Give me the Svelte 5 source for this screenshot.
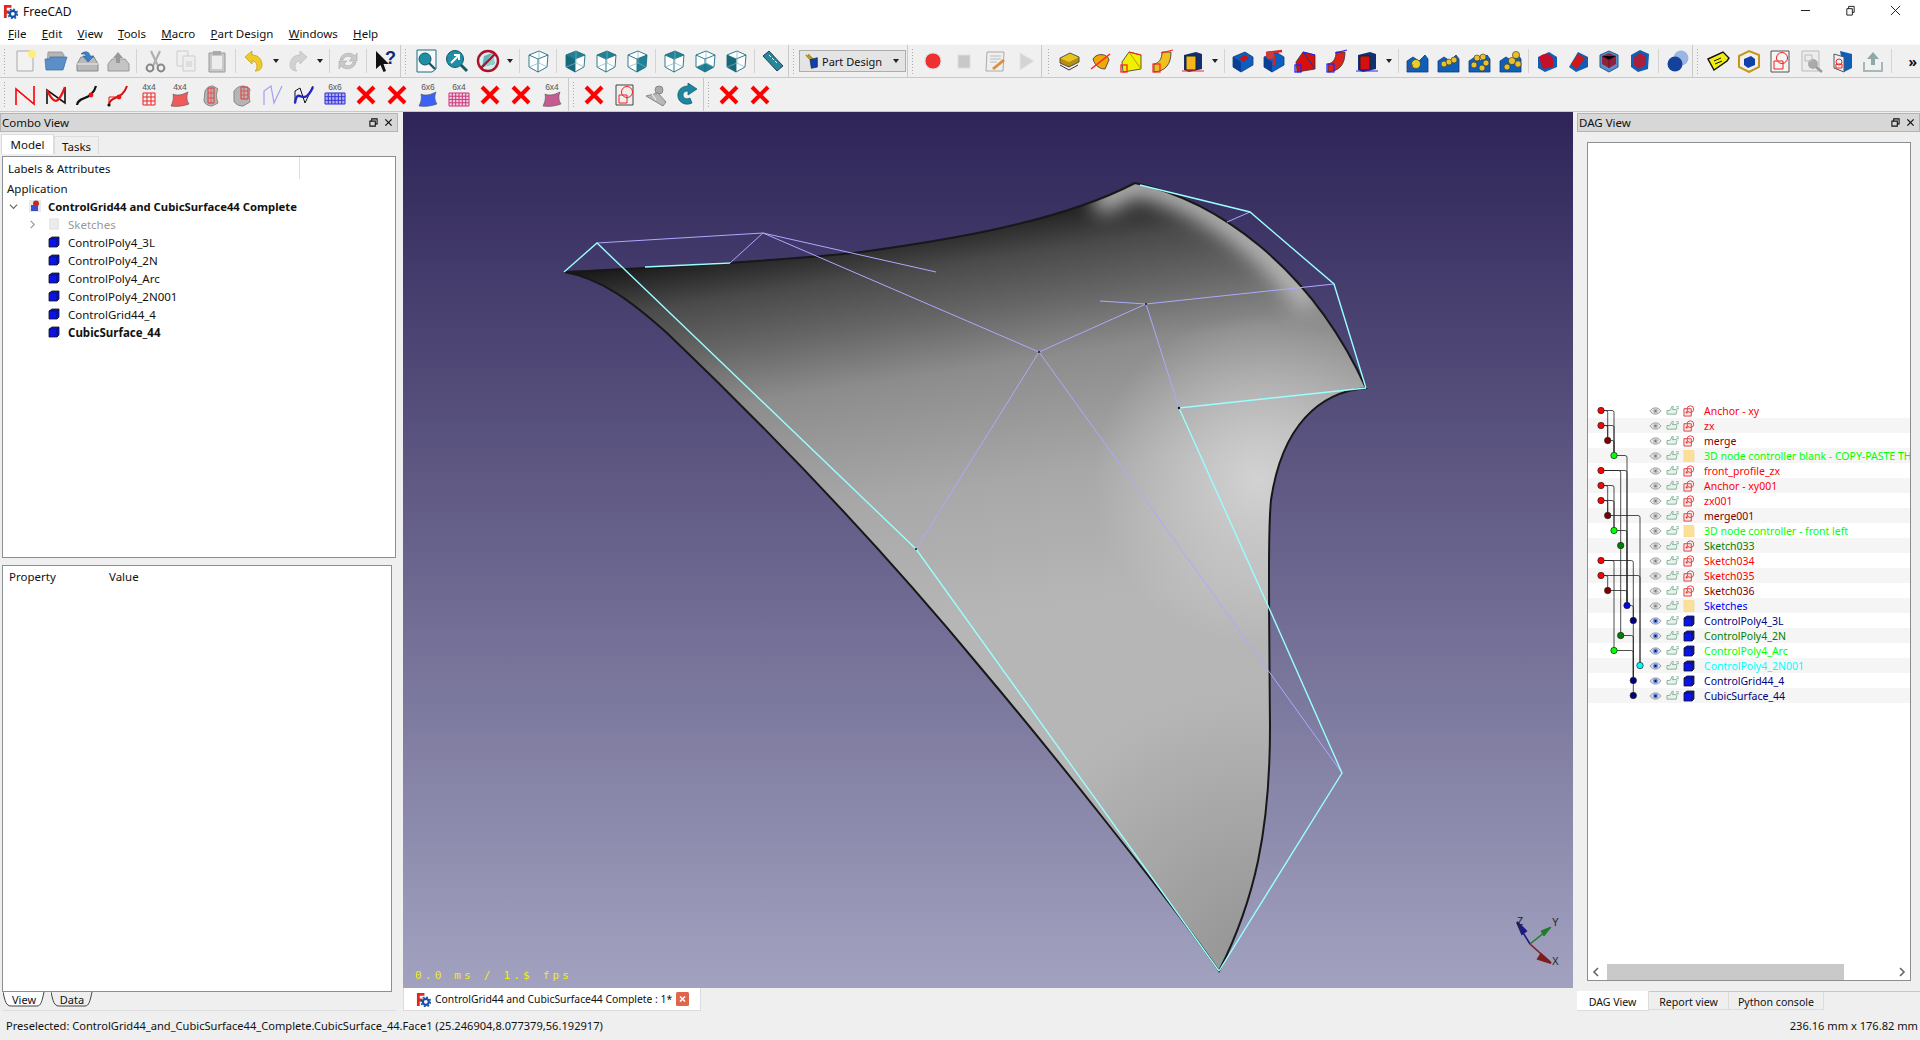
<script lang="ts">
  // shared icon pieces
  const X = '<path d="M4 4L20 20M20 4L4 20" stroke="#f00" stroke-width="4" fill="none"/>';
  const lbl = (t: string) =>
    `<text x="12" y="7" font-size="8.5" text-anchor="middle" font-family="Liberation Sans" fill="#555">${t}</text>`;

  function grid(t: string, cols: number, rows: number, col: string, w: number, h: number, fill = 'none') {
    const left = 12 - w / 2;
    const top = 10;
    let s = lbl(t) + `<rect x="${left}" y="${top}" width="${w}" height="${h}" fill="${fill}"/>`;
    for (let i = 0; i <= cols; i++) {
      const p = left + (w * i) / cols;
      s += `<path d="M${p} ${top}V${top + h}" stroke="${col}" stroke-width="1.1"/>`;
    }
    for (let i = 0; i <= rows; i++) {
      const p = top + (h * i) / rows;
      s += `<path d="M${left} ${p}H${left + w}" stroke="${col}" stroke-width="1.1"/>`;
    }
    return s;
  }

  const blob = (t: string, col: string) =>
    lbl(t) + `<path d="M5 11C9 13 14 12 20 9C18 14 19 18 21 21C16 23 9 24 3 23C5 19 6 15 5 11Z" fill="${col}" stroke="#555" stroke-width=".6"/>`;

  // view cube with one or more faces filled
  function cube(top = false, left = false, right = false, back = false) {
    const f = '#1f8296';
    return `<path d="M3 6L13 2L22 6L12 10Z" fill="${top ? f : '#fff'}"/>
      <path d="M3 6L12 10L12 23L3 18Z" fill="${left ? '#17687a' : '#fff'}"/>
      <path d="M12 10L22 6L21 18L12 23Z" fill="${right ? f : '#fff'}"/>
      ${back ? `<path d="M3 18L13 14L21 18L12 23Z" fill="${f}"/>` : ''}
      <path d="M3 6L13 2L22 6L21 18L12 23L3 18Z M3 6L12 10L22 6M12 10V23" fill="none" stroke="#1b6c80" stroke-width=".9"/>
      <path d="M13 2V14M3 18L13 14L21 18" fill="none" stroke="#7fb3bf" stroke-width=".7"/>`;
  }

  function pd(col: string, dark: string, kind: string, line: string) {
    const shapes: Record<string, string> = {
      pad: `<path d="M3 9L13 4L22 8L12 13Z" fill="${col}"/><path d="M3 9L12 13V18L3 14Z" fill="${dark}"/><path d="M12 13L22 8V13L12 18Z" fill="${dark}"/><path d="M3 9L13 4L22 8V13L12 18L3 14Z" fill="none" stroke="#333" stroke-width=".8"/><path d="M3 16L12 21L21 16" fill="none" stroke="#333" stroke-width="1"/>`,
      rev: `<path d="M5 10C9 3 20 5 21 11L17 20C12 20 7 17 5 10Z" fill="${col}" stroke="#333" stroke-width=".8"/><path d="M3 20L22 5" stroke="${line}" stroke-width="1.5"/>`,
      loft: `<path d="M3 13L10 3L22 6V20L4 23Z" fill="${col}" stroke="#333" stroke-width=".8"/><path d="M10 3L22 20" stroke="${dark}" stroke-width="1"/><rect x="2" y="16" width="6" height="7" fill="none" stroke="${line}" stroke-width="1.3"/><path d="M10 3L22 6" stroke="${line}" stroke-width="1.2"/>`,
      pipe: `<path d="M12 3H21C21 15 16 22 4 23V15C9 14 12 10 12 3Z" fill="${col}" stroke="#333" stroke-width=".8"/><rect x="3" y="15" width="7" height="8" fill="none" stroke="${line}" stroke-width="1.2"/><path d="M11 4L23 1" stroke="${line}" stroke-width="1.2"/>`,
      box: `<path d="M3 6L15 3L21 5V20L8 23L3 21Z" fill="${dark}"/><path d="M5 7H15V21H5Z" fill="${col}" stroke="#222" stroke-width="1"/><path d="M1 22H23" stroke="${line}" stroke-width="1"/>`
    };
    return shapes[kind];
  }

  const blue = '<path d="M2 8L14 3L22 8V16L10 23L2 18Z" fill="#0a5fc0" stroke="#123a7a" stroke-width=".8"/><path d="M2 8L10 13V23L2 18Z" fill="#0b3f96"/>';
  const feat = (dots: string) =>
    `<path d="M2 23V12L8 8L14 12L20 6L23 10V23Z" fill="#0f5fb8" stroke="#123a7a" stroke-width=".8"/>${dots}`;
  const nut = (x: number, y: number, r = 3, c = '#e7c02a') =>
    `<circle cx="${x}" cy="${y}" r="${r}" fill="${c}" stroke="#333" stroke-width=".6"/>`;

  const icons: Record<string, string> = {
    new: '<path d="M4 2H20V22H4Z" fill="#f2f2f2" stroke="#aaa"/><circle cx="19" cy="5" r="4" fill="#ffef7a"/>',
    open: '<path d="M4 3H18L20 6V18H3Z" fill="#b5b5b5" stroke="#888" stroke-width=".7"/><path d="M6 8H23L19 21H2L1 10H6Z" fill="#5b8fc7" stroke="#3c6aa0" stroke-width=".7"/>',
    save: '<path d="M2 15L6 8H19L23 15V22H2Z" fill="#b9b9b9" stroke="#888"/><path d="M2 15H23" stroke="#eee"/><path d="M6 5C10 1 15 3 15 7H19L13 13L8 7H11C11 5 9 5 6 5Z" fill="#3f80c5" stroke="#245b96" stroke-width=".6"/>',
    saveas: '<path d="M2 15L6 10H19L23 15V22H2Z" fill="#c4c4c4" stroke="#999"/><path d="M12 3L17 9H14V14H10V9H7Z" fill="#999"/>',
    cut: '<path d="M8 2L15 17M17 2L10 17" stroke="#b0b0b0" stroke-width="2.2" fill="none"/><circle cx="7" cy="19" r="3.4" fill="none" stroke="#888" stroke-width="2"/><circle cx="18" cy="19" r="3.4" fill="none" stroke="#888" stroke-width="2"/>',
    copy: '<path d="M3 2H14V17H3Z" fill="#efefef" stroke="#ccc"/><path d="M9 7H21V22H9Z" fill="#eee" stroke="#ccc"/><path d="M12 12H18V18H12Z" fill="#ddd"/>',
    paste: '<path d="M4 4H20V23H4Z" fill="#c9c9c9" stroke="#999"/><path d="M7 7H17V20H7Z" fill="#ededed"/><path d="M8 2H16V6H8Z" fill="#aaa"/>',
    undo: '<path d="M3 8L10 2V6C17 6 20 11 20 16C20 20 17 22 13 22C16 20 16 12 10 12V15Z" fill="#f0c92a" stroke="#b99610" stroke-width=".7"/>',
    redo: '<path d="M21 8L14 2V6C7 6 4 11 4 16C4 20 7 22 11 22C8 20 8 12 14 12V15Z" fill="#d2d2d2" stroke="#bbb" stroke-width=".7"/>',
    refresh: '<path d="M4 11C5 4 15 2 19 7L21 4V12H13L16 9C13 6 8 7 7 11ZM20 13C19 20 9 22 5 17L3 20V12H11L8 15C11 18 16 17 17 13Z" fill="#c9c9c9" stroke="#aaa" stroke-width=".6"/>',
    help: '<path d="M3 2V20L7.5 16L10.5 23L13 22L10.5 15H16Z" fill="#111"/><text x="17.5" y="15" font-size="18" font-weight="700" text-anchor="middle" font-family="Liberation Sans" fill="#14257a">?</text>',
    fitall: '<path d="M3 1H22V20L18 23H3Z" fill="#f7f7f7" stroke="#1b6c80"/><circle cx="11" cy="10" r="6" fill="#1f8fa5" stroke="#14586a"/><path d="M15 14L21 20" stroke="#14586a" stroke-width="2.4"/>',
    fitsel: '<circle cx="10" cy="10" r="8.5" fill="#1f8fa5" stroke="#14586a"/><path d="M6 14L13 7M9 6H14V11" stroke="#fff" stroke-width="2" fill="none"/><path d="M16 16L22 22" stroke="#14586a" stroke-width="3"/>',
    style: '<circle cx="12" cy="12" r="10" fill="#d8eeee"/><path d="M6 18L8 7L16 4L19 15Z" fill="#5fb4c0"/><path d="M6 18L19 15L16 4Z" fill="#8fd0c8"/><circle cx="12" cy="12" r="10" fill="none" stroke="#b0112a" stroke-width="2.4"/><path d="M19 5L5 19" stroke="#b0112a" stroke-width="2.4"/>',
    iso: cube(),
    front: cube(true, true),
    top: cube(true),
    right: cube(false, false, true),
    rear: cube(true, false, false),
    bottom: cube(false, false, false, true),
    leftv: cube(false, true),
    measure: '<path d="M8 2L22 17L16 22L2 7Z" fill="#25869c" stroke="#123" stroke-width=".8"/><path d="M8 6L10 8M11 9L13 11M14 12L16 14" stroke="#dff" stroke-width="1"/>',
    record: '<circle cx="12" cy="12" r="8" fill="#ee3030" stroke="#d8d8d8"/>',
    stop: '<rect x="6" y="6" width="12" height="13" fill="#c8c8c8" stroke="#ddd"/>',
    macro: '<path d="M4 3H21L20 22H3Z" fill="#efefef" stroke="#aaa"/><path d="M7 7H18M7 10H18M7 13H14" stroke="#bbb"/><path d="M9 19L20 10L22 12L11 21Z" fill="#d9913a"/>',
    run: '<path d="M6 4L20 12L6 21Z" fill="#d4d4d4" stroke="#e4e4e4"/>',
    pad: pd('#e8c41c', '#b48f10', 'pad', '#f00'),
    rev: pd('#f0a808', '#c27c00', 'rev', '#f22'),
    loft: pd('#f0f000', '#b4a000', 'loft', '#f22'),
    pipe: pd('#f0c020', '#b09000', 'pipe', '#f22'),
    box: pd('#f5b81c', '#123070', 'box', '#f22'),
    pocket: blue + '<path d="M8 9L14 6L18 9L12 13Z" fill="#c81414"/>',
    hole: blue + '<path d="M4 4L20 2M12 6V16" stroke="#d22" stroke-width="2.5"/><circle cx="8" cy="6" r="4" fill="#d03a3a"/>',
    rloft: pd('#d80f0f', '#0c3ea0', 'loft', '#22f'),
    rpipe: pd('#d8241c', '#902010', 'pipe', '#22f'),
    rbox: pd('#d80f0f', '#123070', 'box', '#22f'),
    mirror: feat(nut(11, 15, 4.5, '#e9d021')) + '<path d="M2 21L9 15" stroke="#e22" stroke-dasharray="2 1"/>',
    linear: feat(nut(8, 15) + nut(13, 13) + nut(18, 11)),
    polar: feat(nut(7, 16) + nut(10, 9) + nut(16, 8) + nut(19, 14) + nut(15, 19)),
    multi: feat(nut(9, 18) + nut(14, 12, 3.6) + nut(18, 6, 3.6) + nut(20, 15, 3.2)),
    fillet: '<path d="M3 8L14 3L22 8V18L10 23L3 19Z" fill="#0f5fb8"/><path d="M4 9C6 4 16 3 18 10V18L8 20Z" fill="#c6102a"/>',
    chamfer: '<path d="M3 18L12 3L22 8V18L10 23Z" fill="#0f5fb8"/><path d="M5 15L12 5L19 9L11 20Z" fill="#d01818"/>',
    draft: '<path d="M3 6L12 2L21 6V18L12 23L3 18Z" fill="#5a90c8" stroke="#235a96"/><path d="M5 7L12 4L19 7V15L12 19L5 15Z" fill="#942040"/><path d="M12 11V19M5 7L12 11L19 7" stroke="#60142a"/>',
    thick: '<path d="M3 6L12 1L21 5L20 20L10 23L3 18Z" fill="#0f5fb8"/><path d="M6 8L12 4L18 7V16L10 20L6 16Z" fill="#a8203c"/>',
    bool: '<circle cx="16" cy="9" r="7.5" fill="#9bb6e3"/><circle cx="10" cy="15" r="7.5" fill="#14419a"/>',
    tag: '<path d="M2 10L17 3L23 9L21 12L8 21Z" fill="#f3ee12" stroke="#111" stroke-width="1.4"/><path d="M8 12L15 9M9 15L16 12" stroke="#111"/>',
    part: '<path d="M2 7L12 2L22 6V18L12 23L2 18Z" fill="none" stroke="#c8941e" stroke-width="2"/><path d="M7 10L14 7L18 10V16L11 19L7 16Z" fill="#0f3fa8"/>',
    sk: '<path d="M3 2H21V23H3Z" fill="#f4f4f4" stroke="#555"/><path d="M6 12H15V20H6Z" fill="none" stroke="#e22"/><circle cx="14" cy="9" r="5.5" fill="none" stroke="#e22"/>',
    skzoom: '<path d="M3 2H20V22H3Z" fill="#ececec" stroke="#bbb"/><circle cx="14" cy="15" r="5" fill="#aaa"/><path d="M17 18L23 23" stroke="#999" stroke-width="2.4"/><path d="M6 6H13V12H6Z" fill="none" stroke="#bbb"/>',
    skbody: '<path d="M10 2L22 5V19L14 23Z" fill="#0f5fb8"/><path d="M4 5L14 8V23L4 19Z" fill="#f2f2f2" stroke="#555"/><circle cx="9" cy="13" r="3" fill="none" stroke="#e22"/><path d="M6 15H12V19H6Z" fill="none" stroke="#e22"/>',
    up: '<path d="M12 3L18 10H14V16H10V10H6Z" fill="#8fa8a8"/><path d="M3 13V22H21V13" fill="none" stroke="#a8b8b8" stroke-width="2"/>',
    x: X,
    n: '<path d="M3 22V6L21 21V3" fill="none" stroke="#f00" stroke-width="1.6"/>',
    n2: '<path d="M3 21V7L21 20V4" fill="none" stroke="#111" stroke-width="1.6"/><path d="M3 7C10 22 14 22 21 4" fill="none" stroke="#e11" stroke-width="2.2"/>',
    arc: '<path d="M2 22C3 13 17 18 21 3" fill="none" stroke="#111" stroke-width="2.2"/><circle cx="16" cy="12" r="2.4" fill="#e11"/>',
    arc2: '<path d="M3 22C4 12 16 18 21 3" fill="none" stroke="#c11" stroke-width="2"/><path d="M3 14V22M3 14L12 14" stroke="#e11"/><circle cx="13" cy="14" r="2.4" fill="#e11"/><circle cx="3" cy="22" r="1.6" fill="#111"/>',
    g44: grid('4x4', 3, 3, '#f03030', 12, 12),
    s44: blob('4x4', '#f05a5a'),
    sw1: '<path d="M6 8C8 4 11 3 14 3L19 6C17 10 17 15 19 20L13 23C9 23 6 21 5 18Z" fill="#b5b5b5" stroke="#888"/><path d="M9 5H15V20H9Z" fill="none" stroke="#e33"/><path d="M9 10H15M9 15H15M12 5V20" stroke="#e33" stroke-width=".7"/>',
    sw2: '<path d="M4 8C7 4 10 3 14 3L20 6C19 11 19 15 20 19L13 23C9 23 5 21 4 18Z" fill="#b5b5b5" stroke="#888"/><path d="M11 4H18V16H11Z" fill="none" stroke="#e33"/><path d="M11 8H18M11 12H18M14 4V16" stroke="#e33" stroke-width=".7"/>',
    nb1: '<path d="M3 22V8L10 3L13 20L21 3" fill="none" stroke="#a0a0f6" stroke-width="1.2"/>',
    nb2: '<path d="M3 21V8L8 5L13 20L21 3" fill="none" stroke="#111" stroke-width="1"/><path d="M3 20C6 2 11 26 21 4" fill="none" stroke="#2424c8" stroke-width="2.4"/>',
    g66: grid('6x6', 6, 3, '#3a3ad8', 20, 11, '#b4b4f4'),
    s66: blob('6x6', '#3a62f4'),
    g64: grid('6x4', 6, 4, '#d04080', 20, 13, '#efd0e4'),
    s64: blob('6x4', '#c45c92'),
    skedit: '<path d="M3 2H20V22H3Z" fill="#efefef" stroke="#444"/><path d="M6 12H14V20H6Z" fill="none" stroke="#e22"/><circle cx="14" cy="9" r="5.5" fill="none" stroke="#e22"/>',
    wrench: '<circle cx="15" cy="7" r="4" fill="#aaa" stroke="#888"/><path d="M2 13L14 10L22 19L19 23Z" fill="#b8b8b8" stroke="#888"/><path d="M8 11L12 17" stroke="#fff"/>',
    redoc: '<path d="M13 3C6 3 2 8 3 14C4 20 11 23 17 20L15 15C11 17 8 15 8 12C8 9 10 8 13 8V12L22 6L13 0Z" fill="#1c87a0" stroke="#14586a" stroke-width=".7"/>'
  };

  type Bar = string[];
  const rowOne: Bar[] = [
    ['new', 'open', 'save', 'saveas', '|', 'cut', 'copy', 'paste', '|', 'undo', 'v', 'redo', 'v', '|', 'refresh', '|', 'help'],
    ['fitall', 'fitsel', 'style', 'v', '|', 'iso', '|', 'front', 'top', 'right', '|', 'rear', 'bottom', 'leftv', '|', 'measure'],
    ['combo'],
    ['record', 'stop', 'macro', 'run'],
    ['pad', 'rev', 'loft', 'pipe', 'box', 'v', '|', 'pocket', 'hole', 'rloft', 'rpipe', 'rbox', 'v', '|', 'mirror', 'linear', 'polar', 'multi', '|', 'fillet', 'chamfer', 'draft', 'thick', '|', 'bool'],
    ['tag', 'part', 'sk', 'skzoom', 'skbody', 'up', '|', 'more']
  ];
  const rowTwo: Bar[] = [
    ['n', 'n2', 'arc', 'arc2', 'g44', 's44', 'sw1', 'sw2', 'nb1', 'nb2', 'g66', 'x', 'x', 's66', 'g64', 'x', 'x', 's64'],
    ['x', 'skedit', 'wrench', 'redoc'],
    ['x', 'x']
  ];

  const menus = ['File', 'Edit', 'View', 'Tools', 'Macro', 'Part Design', 'Windows', 'Help'];

  const treeItems = ['ControlPoly4_3L', 'ControlPoly4_2N', 'ControlPoly4_Arc', 'ControlPoly4_2N001', 'ControlGrid44_4', 'CubicSurface_44'];

  // rows of the dependency graph: label, colour, icon, node column
  const columns = [13, 19.7, 26, 32.7, 39, 45.3, 52];
  const dagRows = [
    { name: 'Anchor - xy', col: '#ff0000', kind: 'sk', at: 0 },
    { name: 'zx', col: '#ff0000', kind: 'sk', at: 0 },
    { name: 'merge', col: '#7f0000', kind: 'sk', at: 1 },
    { name: '3D node controller blank - COPY-PASTE THIS', col: '#00ff00', kind: 'dir', at: 2 },
    { name: 'front_profile_zx', col: '#ff0000', kind: 'sk', at: 0 },
    { name: 'Anchor - xy001', col: '#ff0000', kind: 'sk', at: 0 },
    { name: 'zx001', col: '#ff0000', kind: 'sk', at: 0 },
    { name: 'merge001', col: '#7f0000', kind: 'sk', at: 1 },
    { name: '3D node controller - front left', col: '#00ff00', kind: 'dir', at: 2 },
    { name: 'Sketch033', col: '#007f00', kind: 'sk', at: 3 },
    { name: 'Sketch034', col: '#ff0000', kind: 'sk', at: 0 },
    { name: 'Sketch035', col: '#ff0000', kind: 'sk', at: 0 },
    { name: 'Sketch036', col: '#7f0000', kind: 'sk', at: 1 },
    { name: 'Sketches', col: '#0000ff', kind: 'dir', at: 4 },
    { name: 'ControlPoly4_3L', col: '#00007f', kind: 'body', at: 5 },
    { name: 'ControlPoly4_2N', col: '#007f00', kind: 'body', at: 3 },
    { name: 'ControlPoly4_Arc', col: '#00ff00', kind: 'body', at: 2 },
    { name: 'ControlPoly4_2N001', col: '#00ffff', kind: 'body', at: 6 },
    { name: 'ControlGrid44_4', col: '#00007f', kind: 'body', at: 5 },
    { name: 'CubicSurface_44', col: '#00007f', kind: 'body', at: 5 }
  ];

  const rowY = (r: number) => 7.5 + r * 15;
  // edges: from row, to row, column of the vertical run
  const edges: [number, number, number][] = [
    [0, 3, 2], [0, 2, 1], [1, 2, 1], [1, 3, 2], [2, 3, 2], [3, 13, 4],
    [4, 9, 3], [4, 13, 4], [5, 8, 2], [5, 7, 1], [6, 7, 1], [6, 8, 2],
    [7, 17, 6], [8, 13, 4], [9, 15, 3], [10, 16, 2], [10, 14, 5], [11, 12, 1],
    [11, 17, 6], [12, 13, 4], [13, 14, 5], [14, 18, 5], [15, 18, 5], [16, 18, 5], [18, 19, 5]
  ];
  const edgePath = (e: [number, number, number]) => {
    const x0 = columns[dagRows[e[0]].at];
    const x1 = columns[e[2]];
    const y0 = rowY(e[0]);
    const y1 = rowY(e[1]);
    return `M${x0} ${y0}H${x1 - 2}Q${x1} ${y0} ${x1} ${y0 + 2}V${y1}`;
  };

  const surface =
    'M564 272C650 268 760 262 854 253C950 240 1060 222 1135 183C1215 200 1310 265 1366 388C1320 392 1282 425 1271 500C1268 530 1269 600 1270 727C1270 830 1255 900 1219 971C1170 900 1050 750 980 667C900 570 800 460 667 333C630 300 600 278 564 272Z';
</script>

{#snippet bar(items: string[])}
  <div class="bar">
    <span class="grip"></span>
    {#each items as it}
      {#if it === '|'}
        <span class="sep"></span>
      {:else if it === 'v'}
        <span class="drop"></span>
      {:else if it === 'more'}
        <span class="more">»</span>
      {:else if it === 'combo'}
        <div class="combo">
          <svg class="combo-ic" viewBox="0 0 24 24">
            <path d="M3 3L12 12M6 2L14 10" stroke="#a88a20" stroke-width="2.4" />
            <path d="M9 10L20 7V21L11 23Z" fill="#1040b0" stroke="#123" />
          </svg>
          <span>Part Design</span>
          <span class="combo-arrow"></span>
        </div>
      {:else}
        <span class="tool"><svg viewBox="0 0 24 24">{@html icons[it]}</svg></span>
      {/if}
    {/each}
  </div>
{/snippet}

{#snippet body()}
  <svg class="body-ic" viewBox="0 0 12 12">
    <path d="M1 3L4 1H11V9L9 11H1Z" fill="#0a14e8" stroke="#111" stroke-width=".8" />
    <path d="M1 3H9V11M9 3L11 1" fill="none" stroke="#111" stroke-width=".7" />
  </svg>
{/snippet}

{#snippet logo()}
  <svg class="logo" viewBox="0 0 16 16">
    <path d="M1 1H9V4H4V7H7V10H4V15H1Z" fill="#e0281e" />
    <circle cx="10.5" cy="10.5" r="3.2" fill="none" stroke="#1450a8" stroke-width="2.4" />
    <circle cx="10.5" cy="10.5" r="5" fill="none" stroke="#1450a8" stroke-width="1.6" stroke-dasharray="2 1.9" />
  </svg>
{/snippet}

<div class="app">
  <header class="titlebar">
    {@render logo()}
    <span class="app-name">FreeCAD</span>
    <div class="winbtns">
      <svg viewBox="0 0 12 12"><path d="M1 6H11" stroke="#111" /></svg>
      <svg viewBox="0 0 12 12"><path d="M2 4H8V11H2ZM4 4V1.500H10V8H8" fill="none" stroke="#111" /></svg>
      <svg viewBox="0 0 12 12"><path d="M1 1L11 11M11 1L1 11" stroke="#111" /></svg>
    </div>
  </header>

  <nav class="menu">
    {#each menus as m}
      <span><u>{m[0]}</u>{m.slice(1)}</span>
    {/each}
  </nav>

  <div class="toolrow first">
    {#each rowOne as b}{@render bar(b)}{/each}
  </div>
  <div class="toolrow second">
    {#each rowTwo as b}{@render bar(b)}{/each}
  </div>

  <main class="main">
    <aside class="left">
      <div class="docktitle">
        <span>Combo View</span>
        <span class="dockbtns">
          <svg viewBox="0 0 10 10"><path d="M1 3.500H7V9H1ZM3 3.500V1H9V6.500H7" fill="none" stroke="#111" stroke-width="1.2" /></svg>
          <svg viewBox="0 0 10 10"><path d="M1.500 1.500L8.500 8.500M8.500 1.500L1.500 8.500" stroke="#111" stroke-width="1.400" /></svg>
        </span>
      </div>
      <div class="tabs-top">
        <span class="tab on">Model</span>
        <span class="tab">Tasks</span>
      </div>
      <section class="tree">
        <div class="tree-head"><span>Labels &amp; Attributes</span></div>
        <div class="tree-row app-row">Application</div>
        <div class="tree-row doc">
          <svg class="chev" viewBox="0 0 10 10"><path d="M1 3L5 7L9 3" fill="none" stroke="#666" stroke-width="1.3" /></svg>
          <svg class="doc-ic" viewBox="0 0 14 14">
            <path d="M1 1H13V13H1Z" fill="#e8e8e8" />
            <circle cx="8" cy="4.500" r="3" fill="#c8262a" />
            <path d="M3 6H10V12H3Z" fill="#3c4ec8" />
          </svg>
          <b>ControlGrid44 and CubicSurface44 Complete</b>
        </div>
        <div class="tree-row child muted">
          <svg class="chev small" viewBox="0 0 10 10"><path d="M3 1L7 5L3 9" fill="none" stroke="#999" stroke-width="1.3" /></svg>
          <svg class="body-ic" viewBox="0 0 12 14"><path d="M1 1H11V13H1Z" fill="#ececec" stroke="#ddd" /></svg>
          <span>Sketches</span>
        </div>
        {#each treeItems as name, i}
          <div class="tree-row child">
            <span class="chev small"></span>
            {@render body()}
            <span class:strong={i === treeItems.length - 1}>{name}</span>
          </div>
        {/each}
      </section>
      <section class="props">
        <div class="props-head"><span>Property</span><span>Value</span></div>
      </section>
      <div class="tabs-bottom">
        {#each ['View', 'Data'] as label, i}
          <span class="slant">
            <svg viewBox="0 0 42 15" preserveAspectRatio="none">
              <path d="M0 0C2 9 3 14 8 14H34C38 14 39 9 41 0" fill={i === 0 ? '#fff' : 'none'} stroke="#444" />
            </svg>
            <span class="slant-label">{label}</span>
          </span>
        {/each}
      </div>
    </aside>

    <div class="center">
      <div class="viewport">
        <svg class="scene" viewBox="403 112 1170 876">
          <defs>
            <linearGradient id="sky" x1="0" y1="0" x2="0" y2="1">
              <stop offset="0" stop-color="#2e2458" />
              <stop offset="1" stop-color="#a2a2c0" />
            </linearGradient>
            <linearGradient id="shade" gradientUnits="userSpaceOnUse" x1="700" y1="250" x2="760" y2="650">
              <stop offset="0" stop-color="#141414" />
              <stop offset=".127" stop-color="#4a4a4a" />
              <stop offset=".25" stop-color="#666" />
              <stop offset=".39" stop-color="#8c8c8c" />
              <stop offset=".68" stop-color="#a8a8a8" />
              <stop offset="1" stop-color="#b6b6b6" />
            </linearGradient>
            <radialGradient id="lobe" gradientUnits="userSpaceOnUse" cx="1258" cy="480" r="165">
              <stop offset="0" stop-color="#d2d2d2" />
              <stop offset=".45" stop-color="#d2d2d2" stop-opacity=".55" />
              <stop offset="1" stop-color="#d2d2d2" stop-opacity="0" />
            </radialGradient>
            <radialGradient id="tip" gradientUnits="userSpaceOnUse" cx="1260" cy="960" r="270">
              <stop offset="0" stop-color="#949494" />
              <stop offset="1" stop-color="#949494" stop-opacity="0" />
            </radialGradient>
            <filter id="soft" x="-30%" y="-30%" width="160%" height="160%">
              <feGaussianBlur stdDeviation="10" />
            </filter>
            <clipPath id="surf-clip">
              <path d={surface} />
            </clipPath>
          </defs>
          <rect x="403" y="112" width="1170" height="876" fill="url(#sky)" />

          <g clip-path="url(#surf-clip)">
            <rect x="540" y="170" width="850" height="810" fill="url(#shade)" />
            <path d="M1095 204C1110 196 1125 189 1135 183C1200 197 1262 238 1312 305" fill="none" stroke="#b8b8b8" stroke-width="26" filter="url(#soft)" />
            <rect x="1090" y="310" width="300" height="340" fill="url(#lobe)" />
            <rect x="980" y="680" width="300" height="300" fill="url(#tip)" />
          </g>
          <path class="outline" d={surface} />

          <g class="lav">
            <path d="M597 243L763 233L936 272" />
            <path d="M763 233L730 263" stroke-width=".8" />
            <path d="M763 233L1039 352L1146 304L1334 284" />
            <path d="M1100 301L1146 304L1179 408" stroke-width=".9" />
            <path d="M1039 352L916 549" stroke-width=".7" />
            <path d="M1039 352L1342 773" stroke-width=".7" />
            <path d="M1250 212L1227 222" stroke-width=".9" />
          </g>
          <g class="cyan">
            <path d="M564 272L597 243L916 549L1219 971" />
            <path d="M645 267L730 263" />
            <path d="M1140 185L1250 212L1334 284L1366 388" />
            <path d="M1366 388L1179 408" stroke-width="2.800" />
            <path d="M1179 408L1269 608L1342 773L1219 971" stroke-width="1.800" />
          </g>
          <circle cx="916" cy="549" r="1" fill="#111" />
          <circle cx="1179" cy="408" r="1.200" fill="#111" />
          <circle cx="1146" cy="304" r="1" fill="#111" />
          <circle cx="1039" cy="352" r="1" fill="#111" />

          <!-- axis cross -->
          <g class="axis">
            <path d="M1530 944L1519 926" stroke="#1c1c80" stroke-width="1.600" />
            <path d="M1517 922L1522 934L1526 931Z" fill="#1c1c80" stroke="#1c1c80" stroke-width="2" />
            <path d="M1530 944L1550 928" stroke="#1e7c2c" stroke-width="1.600" />
            <path d="M1551 927L1541 931L1544 936Z" fill="#1e7c2c" stroke="#1e7c2c" />
            <path d="M1530 944L1549 961" stroke="#7c1e1e" stroke-width="1.600" />
            <path d="M1551 963L1541 954L1538 959Z" fill="#7c1e1e" stroke="#7c1e1e" stroke-width="2" />
            <text x="1517" y="925">Z</text>
            <text x="1552" y="926">Y</text>
            <text x="1552" y="965">X</text>
          </g>
        </svg>
        <span class="fps">0.0 ms / 1.$ fps</span>
      </div>
      <div class="mdi">
        <span class="mdi-tab">
          {@render logo()}
          <span>ControlGrid44 and CubicSurface44 Complete : 1*</span>
          <svg class="mdi-x" viewBox="0 0 13 14">
            <rect width="13" height="14" rx="1.500" fill="#e0654c" />
            <path d="M4 4.500L9 9.500M9 4.500L4 9.500" stroke="#fff" stroke-width="1.600" />
          </svg>
        </span>
      </div>
    </div>

    <aside class="right">
      <div class="docktitle">
        <span>DAG View</span>
        <span class="dockbtns">
          <svg viewBox="0 0 10 10"><path d="M1 3.500H7V9H1ZM3 3.500V1H9V6.500H7" fill="none" stroke="#111" stroke-width="1.2" /></svg>
          <svg viewBox="0 0 10 10"><path d="M1.500 1.500L8.500 8.500M8.500 1.500L1.500 8.500" stroke="#111" stroke-width="1.400" /></svg>
        </span>
      </div>
      <section class="dag">
        <div class="dag-list">
          {#each dagRows as r, i}
            <div class="dag-row" class:alt={i % 2 === 1}>
              <svg class="eye" viewBox="0 0 14 10">
                <path d="M1 5C4 0.500 10 0.500 13 5C10 9.500 4 9.500 1 5Z" fill={r.kind === 'body' ? '#cfd8f6' : '#e4e4e4'} stroke="#999" />
                <circle cx="7" cy="5" r="2.600" fill={r.kind === 'body' ? '#5f7fe0' : '#bbb'} />
                <circle cx="7" cy="5" r="1.200" fill={r.kind === 'body' ? '#112' : '#777'} />
              </svg>
              <svg class="hand" viewBox="0 0 14 12">
                <path d="M1 6H4L7 1L8 2L7 5H11C12 5 12 6 11.500 7L11 10H4L1 10Z" fill="#e8f2ea" stroke="#7cb196" />
                <path d="M11 2H14M11.500 4H14" stroke="#7cb196" />
              </svg>
              {#if r.kind === 'sk'}
                <svg class="kind" viewBox="0 0 13 13">
                  <path d="M1 4H9V12H1Z" fill="#f6e6e6" stroke="#e23a3a" />
                  <circle cx="8" cy="4.500" r="3.600" fill="none" stroke="#e23a3a" />
                  <circle cx="4" cy="8" r="1.200" fill="#e23a3a" />
                </svg>
              {:else if r.kind === 'dir'}
                <svg class="kind" viewBox="0 0 13 13"><path d="M1 0H11L12 2V13H1Z" fill="#fbe09a" stroke="#f4d27a" stroke-width=".5" /></svg>
              {:else}
                {@render body()}
              {/if}
              <span class="dag-name" style="color:{r.col}">{r.name}</span>
            </div>
          {/each}
          <svg class="graph" viewBox="0 0 60 300">
            {#each edges as e}
              <path d={edgePath(e)} fill="none" stroke="#222" stroke-width=".8" />
            {/each}
            {#each dagRows as r, i}
              <circle cx={columns[r.at]} cy={rowY(i)} r="3.200" fill={r.col} stroke="#222" stroke-width=".7" />
            {/each}
          </svg>
        </div>
        <div class="hscroll">
          <svg viewBox="0 0 8 10"><path d="M6 1L2 5L6 9" fill="none" stroke="#666" stroke-width="1.600" /></svg>
          <span class="thumb"></span>
          <svg viewBox="0 0 8 10"><path d="M2 1L6 5L2 9" fill="none" stroke="#666" stroke-width="1.600" /></svg>
        </div>
      </section>
      <div class="tabs-dock">
        <span class="dock-tab on">DAG View</span>
        <span class="dock-tab report">Report view</span>
        <span class="dock-tab py">Python console</span>
      </div>
    </aside>
  </main>

  <footer class="status">
    <span>Preselected: ControlGrid44_and_CubicSurface44_Complete.CubicSurface_44.Face1 (25.246904,8.077379,56.192917)</span>
    <span>236.16 mm x 176.82 mm</span>
  </footer>
</div>

<style>
  :global(body) {
    margin: 0;
  }

  .app {
    width: 1920px;
    height: 1040px;
    display: flex;
    flex-direction: column;
    overflow: hidden;
    background: #efefef;
    font-family: 'Noto Sans', 'Open Sans', sans-serif;
    font-size: 11.5px;
    color: #111;
  }

  /* Title bar and menu */
  .titlebar {
    height: 22px;
    background: #fff;
    display: flex;
    align-items: center;
    padding-left: 3px;
  }

  .logo {
    width: 15px;
    height: 15px;
    flex-shrink: 0;
  }

  .app-name {
    margin-left: 5px;
    font-size: 12px;
  }

  .winbtns {
    margin-left: auto;
    display: flex;
    gap: 34px;
    padding-right: 19px;
    margin-top: -2px;
  }

  .winbtns svg {
    width: 11px;
    height: 11px;
  }

  .menu {
    height: 22px;
    background: #fff;
    display: flex;
    align-items: center;
    gap: 15.3px;
    padding-left: 8px;
  }

  /* Toolbars */
  .toolrow {
    display: flex;
    background: #f0f0f0;
    box-sizing: border-box;
    height: 34px;
    border-bottom: 1px solid #c9c9c9;
  }

  .toolrow.first {
    border-top: 1px solid #f8f8f8;
  }

  .bar {
    display: flex;
    align-items: center;
    height: 100%;
    border-right: 1px solid #c9c9c9;
  }

  .toolrow.second .bar {
    padding-right: 1px;
  }

  .toolrow.first .bar:nth-child(5) {
    padding-left: 2px;
  }

  .toolrow.first .bar:last-child {
    flex: 1;
    border-right: none;
  }

  .toolrow.second .bar:last-child {
    border-right: none;
  }

  .grip {
    width: 9px;
    align-self: stretch;
    margin: 3px 0;
    background: radial-gradient(circle, #aaa 0.8px, transparent 1px) 3px 0 / 3px 3px repeat-y;
  }

  .tool {
    width: 31px;
    height: 24px;
    display: flex;
    justify-content: center;
  }

  .tool svg {
    width: 24px;
    height: 24px;
  }

  .sep {
    width: 1px;
    height: 24px;
    margin: 0 2.5px;
    background: #d4d4d4;
  }

  .drop {
    width: 13px;
    display: flex;
    justify-content: center;
  }

  .drop::after,
  .combo-arrow {
    content: '';
    border-left: 3.5px solid transparent;
    border-right: 3.5px solid transparent;
    border-top: 4px solid #222;
  }

  .more {
    margin-left: auto;
    margin-right: 3px;
    font-size: 14px;
    font-weight: 700;
  }

  .combo {
    width: 107px;
    height: 22px;
    margin: 0 1px 0 1px;
    border: 1px solid #adadad;
    background: #e4e4e4;
    display: flex;
    align-items: center;
    padding: 0 6px 0 4px;
    box-sizing: border-box;
    gap: 2px;
    font-size: 11px;
  }

  .combo-ic {
    width: 16px;
    height: 16px;
  }

  .combo-arrow {
    margin-left: auto;
  }

  /* Main area */
  .main {
    flex: 1;
    display: flex;
    min-height: 0;
  }

  .left {
    width: 403px;
    flex-shrink: 0;
    display: flex;
    flex-direction: column;
    box-sizing: border-box;
  }

  .docktitle {
    height: 19px;
    margin: 1px 5px 0 0;
    padding: 0 4px 0 1px;
    background: #d7d7d7;
    border: 1px solid #b4b4b4;
    box-sizing: border-box;
    display: flex;
    align-items: center;
    justify-content: space-between;
    flex-shrink: 0;
  }

  .dockbtns {
    display: flex;
    gap: 6px;
  }

  .dockbtns svg {
    width: 9px;
    height: 9px;
  }

  .tabs-top {
    display: flex;
    margin-top: 2px;
    height: 20px;
    padding-left: 1px;
  }

  .tab {
    width: 45px;
    padding: 2px 0 0;
    text-align: center;
    border: 1px solid #dcdcdc;
    border-bottom: none;
    box-sizing: border-box;
    margin-top: 2px;
  }

  .tab.on {
    width: 53px;
    margin-top: 0;
    background: #fff;
    border-bottom: none;
  }

  .tree {
    height: 402px;
    margin: 2px 7px 0 2px;
    background: #fff;
    border: 1px solid #8a8f94;
    box-sizing: border-box;
  }

  .tree-head {
    height: 22px;
    width: 297px;
    border-right: 1px solid #dfdfdf;
    display: flex;
    align-items: center;
    padding-left: 5px;
    box-sizing: border-box;
  }

  .tree-row {
    height: 18px;
    display: flex;
    align-items: center;
  }

  .app-row {
    padding-left: 4px;
  }

  .doc {
    padding-left: 6px;
  }

  .doc b {
    font-size: 11.3px;
  }

  .chev {
    width: 9px;
    height: 9px;
    flex-shrink: 0;
  }

  .chev.small {
    margin-left: 25px;
    width: 9px;
  }

  .doc-ic {
    width: 14px;
    height: 14px;
    margin: 0 6px 0 10px;
    flex-shrink: 0;
  }

  .body-ic {
    width: 12px;
    height: 12px;
    flex-shrink: 0;
  }

  .child .body-ic {
    margin: 0 8px 0 11px;
  }

  .muted {
    color: #999;
  }

  .strong {
    font-weight: 700;
  }

  .props {
    height: 427px;
    margin: 7px 11px 0 2px;
    background: #fff;
    border: 1px solid #8a8f94;
    box-sizing: border-box;
    flex-shrink: 0;
  }

  .props-head {
    display: flex;
    height: 21px;
    align-items: center;
    padding-left: 6px;
  }

  .props-head span:first-child {
    width: 100px;
  }

  .tabs-bottom {
    display: flex;
    height: 18px;
    margin: 0 7px 0 3px;
    border-bottom: 1px solid #dcdcdc;
    gap: 6px;
  }

  .slant {
    width: 42px;
    height: 15px;
    position: relative;
    text-align: center;
    font-size: 11px;
    line-height: 15px;
  }

  .slant svg {
    position: absolute;
    inset: 0;
    width: 100%;
    height: 100%;
  }

  .slant-label {
    position: relative;
  }

  .center {
    width: 1170px;
    flex-shrink: 0;
    display: flex;
    flex-direction: column;
  }

  .viewport {
    height: 876px;
    position: relative;
    flex-shrink: 0;
  }

  .scene {
    display: block;
    width: 100%;
    height: 100%;
  }

  .outline {
    fill: none;
    stroke: #181818;
    stroke-width: 2;
  }

  .lav path {
    fill: none;
    stroke: #aaaaff;
    stroke-width: 1;
  }

  .cyan path {
    fill: none;
    stroke: #99ffff;
    stroke-width: 1.4;
  }

  .axis text {
    font: 10px 'Liberation Sans', sans-serif;
    fill: #222;
  }

  .fps {
    position: absolute;
    left: 12px;
    bottom: 6px;
    font: 11px 'DejaVu Sans Mono', monospace;
    letter-spacing: 3.2px;
    color: #eeee10;
  }

  .mdi {
    height: 23px;
    display: flex;
  }

  .mdi-tab {
    width: 298px;
    background: #fff;
    border: 1px solid #dcdcdc;
    border-top: none;
    box-sizing: border-box;
    display: flex;
    align-items: center;
    gap: 4px;
    padding-left: 12px;
    white-space: nowrap;
    font-size: 10.35px;
  }

  .mdi-x {
    width: 13px;
    height: 14px;
    flex-shrink: 0;
  }

  .right {
    flex: 1;
    display: flex;
    flex-direction: column;
    padding-left: 4px;
    min-width: 0;
  }

  .right .docktitle {
    margin-right: 0;
  }

  .dag {
    height: 839px;
    margin: 10px 9px 0 10px;
    border: 1px solid #8a8f94;
    background: #fff;
    box-sizing: border-box;
    display: flex;
    flex-direction: column;
    overflow: hidden;
    flex-shrink: 0;
  }

  .dag-list {
    flex: 1;
    padding-top: 260px;
    position: relative;
    box-sizing: border-box;
    overflow: hidden;
  }

  .dag-row {
    height: 15px;
    display: flex;
    align-items: center;
    padding-left: 61px;
    white-space: nowrap;
    font-size: 10.5px;
  }

  .dag-row.alt {
    background: #f5f5f5;
  }

  .eye {
    width: 13px;
    height: 10px;
    flex-shrink: 0;
  }

  .hand {
    width: 13px;
    height: 11px;
    margin-left: 4px;
    flex-shrink: 0;
  }

  .kind,
  .dag-row :global(.body-ic) {
    width: 12px;
    height: 12px;
    margin-left: 4px;
    flex-shrink: 0;
  }

  .dag-name {
    margin-left: 9px;
  }

  .graph {
    position: absolute;
    left: 0;
    top: 260px;
    width: 60px;
    height: 300px;
  }

  .hscroll {
    height: 16px;
    display: flex;
    align-items: center;
    justify-content: space-between;
    padding: 0 4px;
    position: relative;
    flex-shrink: 0;
  }

  .hscroll svg {
    width: 8px;
    height: 10px;
  }

  .thumb {
    position: absolute;
    left: 19px;
    top: 0;
    width: 237px;
    height: 16px;
    background: #c9c9c9;
  }

  .tabs-dock {
    display: flex;
    margin-top: 10px;
    border-top: 1px solid #c8c8c8;
    height: 20px;
    font-size: 10.6px;
  }

  .dock-tab {
    padding-top: 3px;
    text-align: center;
    border-right: 1px solid #dcdcdc;
    border-bottom: 1px solid #dcdcdc;
    box-sizing: border-box;
    height: 18px;
    white-space: nowrap;
  }

  .dock-tab.report {
    width: 80px;
  }

  .dock-tab.py {
    width: 95px;
  }

  .dock-tab.on {
    background: #fff;
    height: 20px;
    margin-top: -1px;
    width: 72px;
    padding-top: 4px;
  }

  .status {
    height: 29px;
    flex-shrink: 0;
    display: flex;
    justify-content: space-between;
    align-items: center;
    padding: 0 2px 0 6px;
    font-size: 11.1px;
  }
</style>
